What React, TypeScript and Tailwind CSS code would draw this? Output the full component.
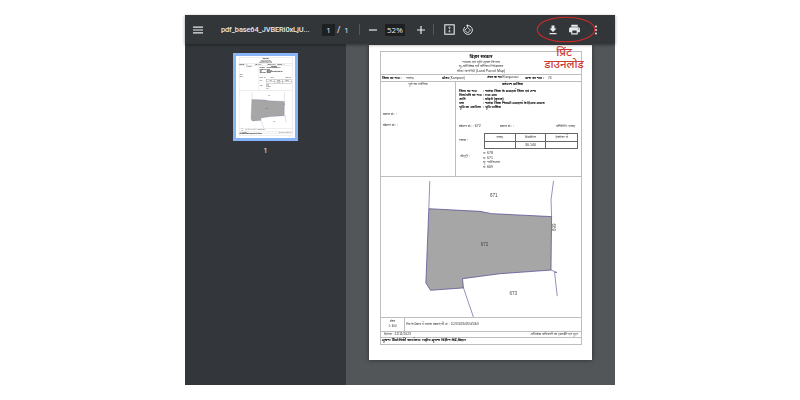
import React from "react";

const Doc = () => (
  <div className="w-[223px] h-[315px] bg-white pl-[11px] pt-[6px] [font-family:'Liberation_Sans','Noto_Sans',sans-serif] text-[#333] blur-[0.25px]">
    <div className="w-[202px] h-[294px] border border-[#bdbdbd] flex flex-col">
      <div className="h-[23px] flex flex-col items-center text-[3.6px] leading-[4.4px] border-b border-[#bdbdbd] pt-[1px]">
        <div className="font-bold text-[4.4px] leading-[7px] text-black">बिहार सरकार</div>
        <div>राजस्व एवं भूमि सुधार विभाग</div>
        <div>भू-अभिलेख एवं परिमाप निदेशालय</div>
        <div>मौजा मानचित्र (Land Parcel Map)</div>
      </div>
      <div className="h-[7px] flex items-center text-[3.3px] border-b border-[#bdbdbd] pl-[1px] whitespace-nowrap">
        <span className="font-bold text-black w-[24px]">जिला का नाम :</span>
        <span className="w-[36px]">नालंदा</span>
        <span className="w-[45px]"><b className="text-black">मौजा</b> (Kampani)</span>
        <span className="w-[38px] text-[2.7px]"><b className="text-black">अंचल का नाम</b> Ekangarsarai</span>
        <span className="font-bold text-black w-[23px]">थाना का नाम :</span>
        <span>74</span>
      </div>
      <div className="h-[95px] flex border-b border-[#bdbdbd] text-[3.6px]">
        <div className="w-[75px] border-r border-[#bdbdbd] flex flex-col">
          <div className="text-center leading-[5px]">पूर्व का मालिक</div>
          <div className="pl-[2px] pt-[25px]">खाता सं॰ :</div>
          <div className="pl-[2px] pt-[6px]">खेसरा सं॰ :</div>
        </div>
        <div className="flex-1 flex flex-col whitespace-nowrap">
          <div className="text-center font-bold text-black leading-[5px] pr-[12px]">वर्तमान मालिक</div>
          <div className="pl-[3px] pt-[2px] font-bold text-black leading-[4.1px] text-[3.3px] flex flex-col">
            <div className="flex"><span className="w-[24px]">जिला का नाम</span><span>: नालंदा जिला के समाहर्ता जिला एवं अन्य</span></div>
            <div className="flex"><span className="w-[24px]">पिता/पति का नाम</span><span>: रामा साव</span></div>
            <div className="flex"><span className="w-[24px]">जाति</span><span>: कोइरी (कृषक)</span></div>
            <div className="flex"><span className="w-[24px]">पता</span><span>: नालंदा जिला निवासी समाहर्ता के हिसाब समाज</span></div>
            <div className="flex"><span className="w-[24px]">भूमि का स्वामित्व</span><span>: भूमि मालिक</span></div>
          </div>
          <div className="flex pl-[3px] pt-[15px]">
            <span className="w-[41px]">खेसरा सं॰ : 672</span>
            <span className="w-[56px]">खाता सं॰ :</span>
            <span>परिमिति: एकड़</span>
          </div>
          <div className="flex pl-[3px] pt-[3px]">
            <span className="w-[25px] pt-[5px]">रकवा :</span>
            <div className="w-[94px] h-[16px] border border-[#666] grid grid-cols-3 text-center leading-[7px]">
              <div className="border-r border-b border-[#666]">एकड़</div>
              <div className="border-r border-b border-[#666]">डिसमिल</div>
              <div className="border-b border-[#666]">हेक्टेयर में</div>
              <div className="border-r border-[#666]"></div>
              <div className="border-r border-[#666]">30.140</div>
              <div></div>
            </div>
          </div>
          <div className="flex pl-[4px] pt-[2px] leading-[4.8px]">
            <span className="w-[23px] pt-[3px]">चौहद्दी :</span>
            <div className="flex flex-col">
              <span>उ: 678</span>
              <span>द: 671</span>
              <span>पू: नदी/रास्ता</span>
              <span>प: 669</span>
            </div>
          </div>
        </div>
      </div>
      <div className="h-[141px] border-b border-[#bdbdbd]">
        <svg width="200" height="141" viewBox="0 0 202 141" className="block">
          <polygon points="48.3,31.3 100,34 111.7,36.3 172.3,39.3 171.7,93.3 120,97 82.3,102 83.3,111.3 50,113.7 45.3,106.3" fill="#a6a6a6" stroke="#4a4590" strokeWidth="0.7" />
          <g fill="none" stroke="#4a4590" strokeWidth="0.6">
            <polyline points="49.3,3.3 48.3,31.3" />
            <polyline points="174.3,3.3 171.7,22.3 172.3,39.3" />
            <polyline points="171.7,93.3 177.7,95.7 175.3,95.7 178,119.7" />
            <polyline points="83.3,111.3 93.3,140.7" />
          </g>
          <g fontSize="4.6" fill="#444" textAnchor="middle" fontFamily="Liberation Sans">
            <text x="114" y="19.8">671</text>
            <text x="104.5" y="69.5">672</text>
            <text x="133.5" y="118.5">673</text>
            <text x="0" y="0" transform="translate(172.5,50) rotate(90)">669</text>
          </g>
        </svg>
      </div>
      <div className="h-[14px] flex border-b border-[#bdbdbd] text-[2.9px]">
        <div className="w-[24px] border-r border-[#bdbdbd] flex flex-col items-center leading-[5px] pt-[1px]">
          <span>स्केल</span>
          <span>1: 400</span>
        </div>
        <div className="pl-[1px] pt-[4px]">भिन्न के प्रखण्ड में आपका संख्याएँ की सं॰ : 1/2/1/3/4/3/4/5/4/5/4/0</div>
      </div>
      <div className="h-[6px] flex justify-between items-center border-b border-[#bdbdbd] text-[3.3px] px-[3px]">
        <span>दिनांक : 12/11/2023</span>
        <span>अभिलेख अधिकारी का हस्ताक्षर एवं मुहर</span>
      </div>
      <div className="flex-1 flex items-center font-bold text-black text-[3.7px] pl-[1px]">सूचना प्रौद्योगिकी कार्यालय: राष्ट्रीय सूचना विज्ञान केंद्र,बिहार</div>
    </div>
  </div>
);

export default function App() {
  return (
    <div className="w-[800px] h-[400px] bg-white pt-[15px] overflow-hidden">
      <div className="relative mx-auto w-[430px] h-[370px] flex flex-col [font-family:'Open_Sans','Noto_Sans',sans-serif] bg-[#525659]">
        <div className="h-[29px] shrink-0 bg-[#323639] flex items-center text-[#e8eaed] shadow-[0_1px_3px_rgba(0,0,0,0.4)] z-10">
          <svg width="12" height="12" viewBox="0 0 24 24" className="ml-[7px]" fill="currentColor"><path d="M2 5h20v2.4H2zM2 10.8h20v2.4H2zM2 16.6h20V19H2z" /></svg>
          <span className="ml-[17px] w-[88px] text-[7.4px] tracking-[-0.1px] font-medium whitespace-nowrap [font-family:Roboto,sans-serif]">pdf_base64_JVBERi0xLjU...</span>
          <span className="ml-[13px] w-[13px] h-[12px] bg-[#1d1f21] text-[8px] flex items-center justify-center">1</span>
          <span className="ml-[2px] text-[9px]">/</span>
          <span className="ml-[4px] text-[8px]">1</span>
          <span className="ml-[10px] w-px h-[11px] bg-[#55595c]"></span>
          <svg width="10" height="10" viewBox="0 0 10 10" className="ml-[8px]" fill="currentColor"><rect x="1" y="4.4" width="8" height="1.2" /></svg>
          <span className="ml-[7px] w-[20px] h-[12px] bg-[#1d1f21] text-[8px] flex items-center justify-center">52%</span>
          <svg width="10" height="10" viewBox="0 0 10 10" className="ml-[11px]" fill="currentColor"><path d="M1 4.4h3.4V1h1.2v3.4H9v1.2H5.6V9H4.4V5.6H1z" /></svg>
          <span className="ml-[7px] w-px h-[11px] bg-[#55595c]"></span>
          <svg width="11" height="11" viewBox="0 0 11 11" className="ml-[10px]" fill="none" stroke="currentColor"><rect x="0.8" y="0.8" width="9.4" height="9.4" strokeWidth="1.1" /><path d="M5.5 2.6v2M4.4 3.6l1.1 1.1 1.1-1.1M5.5 8.4v-2M4.4 7.4l1.1-1.1 1.1 1.1" strokeWidth="0.7" /></svg>
          <svg width="12" height="12" viewBox="0 0 12 12" className="ml-[7px]" fill="none" stroke="currentColor" strokeWidth="0.9"><path d="M6 1.6a4.4 4.4 0 1 1 -3.2 1.4" /><path d="M6 0.2 4 1.7 6 3.2" fill="currentColor" stroke="none" /><rect x="3.6" y="4.2" width="4" height="4" transform="rotate(45 5.6 6.2)" strokeWidth="0.8" /></svg>
          <svg width="12" height="12" viewBox="0 0 24 24" className="ml-auto" fill="currentColor"><path d="M19 9h-4V3H9v6H5l7 7zM5 18v2.4h14V18z" /></svg>
          <svg width="13" height="13" viewBox="0 0 24 24" className="ml-[9px]" fill="currentColor"><path d="M19 8H5c-1.66 0-3 1.34-3 3v6h4v4h12v-4h4v-6c0-1.66-1.34-3-3-3zm-3 11H8v-5h8v5zm3-7c-.55 0-1-.45-1-1s.45-1 1-1 1 .45 1 1-.45 1-1 1zm-1-9H6v4h12V3z" /></svg>
          <svg width="10" height="12" viewBox="0 0 10 12" className="ml-[10px] mr-[14px]" fill="currentColor"><circle cx="5" cy="2.4" r="1" /><circle cx="5" cy="6" r="1" /><circle cx="5" cy="9.6" r="1" /></svg>
        </div>
        <div className="flex-1 flex min-h-0">
          <div className="w-[161px] bg-[#33363a] flex flex-col items-center pt-[9px]">
            <div className="w-[65px] h-[88px] border-[3px] border-[#8ab4f8] bg-white overflow-hidden">
              <div className="w-[223px] h-[315px] origin-top-left scale-[0.265]">
                <Doc />
              </div>
            </div>
            <span className="mt-[3px] text-[8px] text-[#e8eaed]">1</span>
          </div>
          <div className="flex-1 overflow-hidden pl-[23px] pt-px">
            <div className="shadow-[0_0_4px_rgba(0,0,0,0.5)] w-[223px] h-[315px]">
              <Doc />
            </div>
          </div>
        </div>
        <svg width="60" height="27" viewBox="0 0 60 27" className="absolute left-[351px] top-[1px] z-20" fill="none"><ellipse cx="30" cy="13.5" rx="28.8" ry="12.3" stroke="#d02a2a" strokeWidth="1.1" /></svg>
        <div className="absolute left-[339px] top-[31px] w-[80px] z-20 flex flex-col items-center text-[#cf3a32] text-[11.5px] leading-[12px] font-medium [font-family:'Noto_Sans',sans-serif]">
          <span>प्रिंट</span>
          <span>डाउनलोड</span>
        </div>
      </div>
    </div>
  );
}
